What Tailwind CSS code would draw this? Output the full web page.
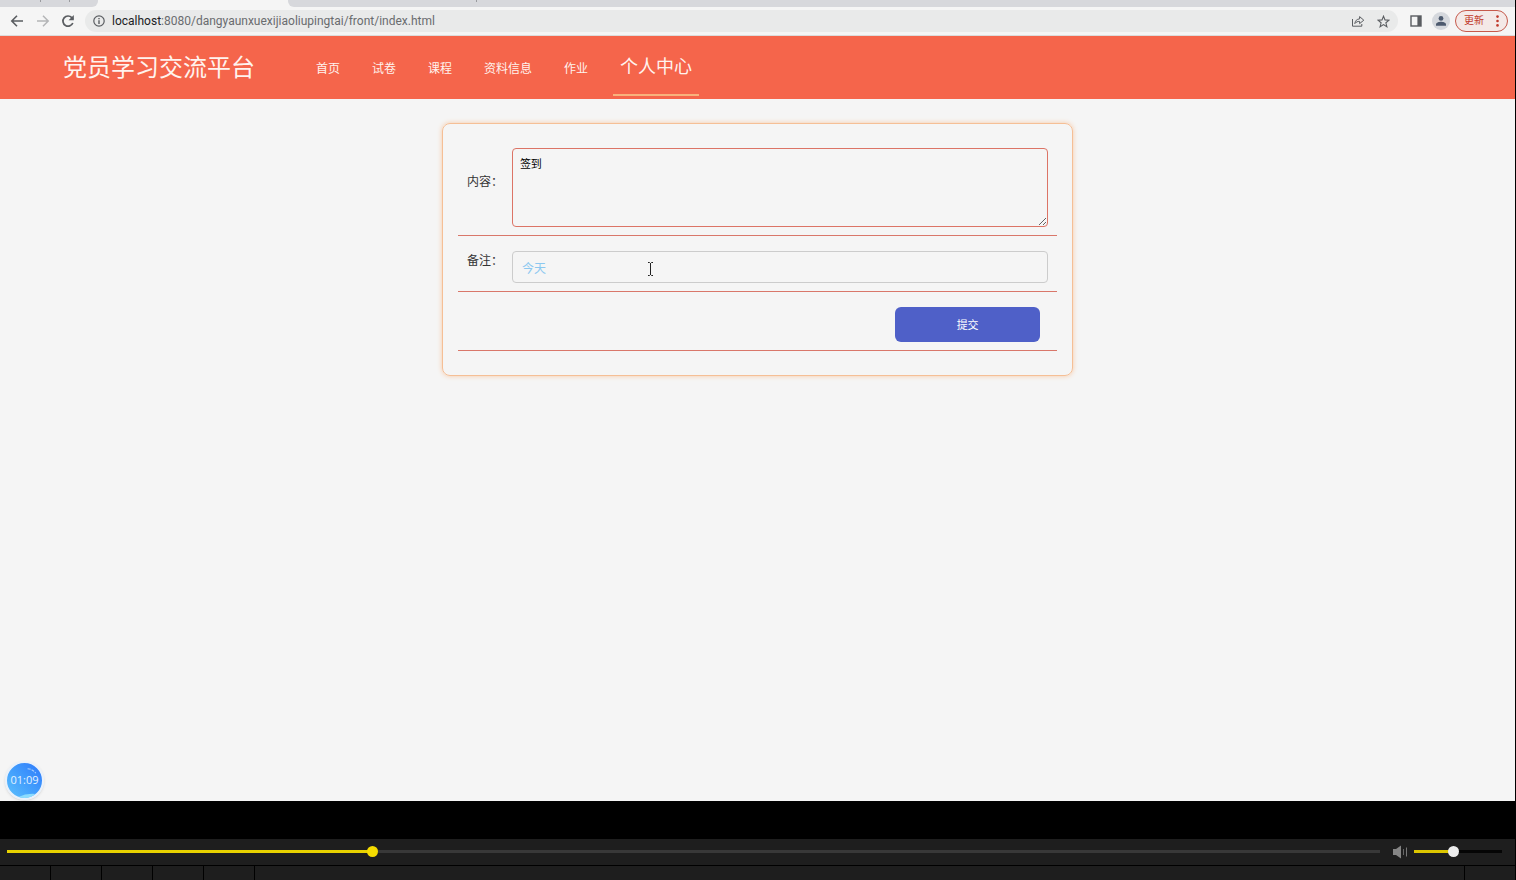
<!DOCTYPE html>
<html lang="zh-CN">
<head>
  <meta charset="UTF-8" />
  <meta name="viewport" content="width=device-width, initial-scale=1.0"/>
  <title>党员学习交流平台</title>
  <script src="https://cdn.jsdelivr.net/npm/@tailwindcss/browser@4"></script>
</head>
<body class="flex flex-col min-h-screen overflow-x-hidden bg-black font-['Open_Sans','Noto_Sans_CJK_SC',sans-serif] text-xs text-[#333]">

  <!-- Browser window -->
  <div class="flex flex-col flex-1 mr-px bg-[#f5f5f5]">

    <!-- Tab strip -->
    <div class="flex h-[7px] bg-[#f5f5f5]">
      <div class="flex justify-end gap-7 w-[98px] pr-7 rounded-br-md bg-[#d7d8dc]">
        <span class="w-px h-[2px] bg-[#9a9b9f]"></span>
        <span class="w-px h-[2px] bg-[#9a9b9f]"></span>
      </div>
      <div class="w-[190px]"></div>
      <div class="flex-1 pl-[188px] rounded-bl-md bg-[#d7d8dc]">
        <div class="w-px h-[2px] bg-[#9a9b9f]"></div>
      </div>
    </div>

    <!-- Toolbar -->
    <div class="flex items-center h-[29px] pl-2 pr-[7px] border-b border-[#dcdcdc] text-[#5a5d61]">
      <button type="button" aria-label="后退" class="w-[18px] flex justify-center">
        <svg class="w-4 h-4" viewBox="0 0 16 16" fill="none" stroke="currentColor" stroke-width="1.6"><path d="M14 8H3M8 2.8L2.8 8L8 13.2"/></svg>
      </button>
      <button type="button" aria-label="前进" class="w-[18px] ml-2 flex justify-center text-[#b4b5b7]">
        <svg class="w-4 h-4" viewBox="0 0 16 16" fill="none" stroke="currentColor" stroke-width="1.5"><path d="M2 8H13M8 2.8L13.2 8L8 13.2"/></svg>
      </button>
      <button type="button" aria-label="刷新" class="w-4 ml-2 flex justify-center">
        <svg class="w-4 h-4" viewBox="0 0 16 16" fill="none" stroke="currentColor" stroke-width="1.7"><path d="M12.8 10A5.1 5.1 0 1 1 11.8 4.6L13 6"/><path d="M13.8 2V7.2H8.6Z" fill="currentColor" stroke="none"/></svg>
      </button>

      <div class="flex items-center flex-1 h-[22px] ml-[9px] px-2 rounded-full bg-[#e9eaea]">
        <svg class="w-3 h-3 shrink-0" viewBox="0 0 12 12" fill="none" stroke="currentColor" stroke-width="1.2"><circle cx="6" cy="6" r="5.2"/><path d="M6 5.3V9M6 3V4.2" stroke-width="1.4"/></svg>
        <p class="flex-1 ml-[7px] font-['Roboto',sans-serif] text-[#6a6c6f]"><span class="text-[#202124]">localhost</span>:8080/dangyaunxuexijiaoliupingtai/front/index.html</p>
        <button type="button" aria-label="分享">
          <svg class="w-[14px] h-[14px]" viewBox="0 0 14 14" fill="none" stroke="currentColor" stroke-width="1"><path d="M1.5 5V12.2H10.8V10"/><path d="M3.8 9.6C4.2 6.8 5.8 5 8.6 4.9V2.6L12.8 6.2L8.6 9.6V7.4C6.6 7.3 5.1 8 3.8 9.6Z"/></svg>
        </button>
        <button type="button" aria-label="收藏" class="ml-3">
          <svg class="w-[13px] h-[13px]" viewBox="0 0 13 13" fill="none" stroke="currentColor" stroke-width="1.1"><path d="M6.5 1.2L8 4.9L12 5.2L8.9 7.8L9.9 11.7L6.5 9.6L3.1 11.7L4.1 7.8L1 5.2L5 4.9Z"/></svg>
        </button>
      </div>

      <button type="button" aria-label="侧边栏" class="ml-3">
        <svg class="w-3 h-3" viewBox="0 0 12 12"><rect x="1" y="1" width="10" height="10" fill="none" stroke="currentColor" stroke-width="1.4"/><path d="M7.4 1H11V11H7.4Z" fill="currentColor"/></svg>
      </button>
      <button type="button" aria-label="用户" class="flex items-center justify-center w-[18px] h-[18px] ml-[10px] rounded-full bg-[#d5d8dd] text-[#4d5a6e]">
        <svg class="w-3 h-3" viewBox="0 0 12 12" fill="currentColor"><circle cx="6" cy="3.4" r="2.4"/><path d="M1 10.8V9.4C1 7.6 4 6.8 6 6.8S11 7.6 11 9.4V10.8Z"/></svg>
      </button>
      <button type="button" class="flex items-center justify-between w-[53px] h-[22px] ml-[5px] px-2 rounded-full border border-[#c65a4c] bg-[#f4e9e7] text-[10px] text-[#c0392b]">
        更新
        <svg class="w-[3px] h-3" viewBox="0 0 3 12" fill="currentColor"><circle cx="1.5" cy="1.6" r="1.3"/><circle cx="1.5" cy="6" r="1.3"/><circle cx="1.5" cy="10.4" r="1.3"/></svg>
      </button>
    </div>

    <!-- Site header -->
    <header class="flex items-center h-[63px] pl-[63px] bg-[#f5654b] text-[#fff3ee]">
      <h1 class="pb-[2px] text-2xl">党员学习交流平台</h1>
      <nav class="flex items-center h-full ml-[45px]">
        <a href="#" class="pt-[2px] px-4">首页</a>
        <a href="#" class="pt-[2px] px-4">试卷</a>
        <a href="#" class="pt-[2px] px-4">课程</a>
        <a href="#" class="pt-[2px] px-4">资料信息</a>
        <a href="#" class="pt-[2px] px-4">作业</a>
        <a href="#" class="flex items-center h-[59px] mt-px ml-[9px] px-[7px] pt-[2px] mb-1 border-b-2 border-[#f8b27c] text-lg">个人中心</a>
      </nav>
    </header>

    <!-- Form card -->
    <main class="flex-1 pt-6">
      <form class="w-5/12 mx-auto pt-[9px] pb-6 px-[15px] rounded-lg border border-[#f5bf96] shadow-[0_0_5px_#f8c9a4]">
        <div class="flex items-center mt-[15px] px-[9px] pb-2 border-b border-[#d9776a]">
          <label for="content" class="w-[45px] pb-3">内容：</label>
          <textarea id="content" class="block flex-1 h-[79px] px-[7px] py-[6px] rounded border border-[#dc7466] text-[11px] leading-[18px] text-black resize">签到</textarea>
        </div>
        <div class="flex items-center mt-[15px] px-[9px] pb-2 border-b border-[#d9776a]">
          <label for="remark" class="w-[45px] pb-3">备注：</label>
          <input id="remark" type="text" value="今天" class="flex-1 h-8 px-[9px] pt-px rounded-sm border border-[#cccccc] text-[#8cc8f0]" />
        </div>
        <div class="flex justify-end mt-[15px] px-[17px] pb-2 border-b border-[#d9776a]">
          <button type="submit" class="w-[145px] h-[35px] pt-px rounded-md bg-[#4f60c8] text-[11px] text-white">提交</button>
        </div>
      </form>
    </main>
  </div>

  <!-- Mouse pointer -->
  <svg class="absolute left-[646px] top-[262px] w-[9px] h-[14px]" viewBox="0 0 9 14" fill="none" stroke="#222" stroke-width="1"><path d="M2 .5H3.5L4.5 1.5L5.5 .5H7M4.5 1V13M2 13.5H3.5L4.5 12.5L5.5 13.5H7"/></svg>

  <!-- Recording time -->
  <div class="absolute left-[5px] top-[761px] flex items-center justify-center w-[39px] h-[39px] rounded-full border-2 border-[#e9f1fb] bg-linear-to-bl from-[#2f78fb] to-[#5cc0fc] text-[11px] text-[#e3f2ff] shadow-sm overflow-hidden">
    <svg class="absolute inset-0 w-full h-full" viewBox="0 0 34 34" fill="none"><path d="M20 5.5Q25 6 28 10" stroke="#a9d0ff" stroke-width="1" stroke-dasharray="3 1"/><path d="M11 33Q19 29 28 30L23 34H12Z" fill="#8cdcfd"/></svg>
    <span class="relative">01:09</span>
  </div>

  <!-- Video player -->
  <footer class="mt-[38px]">
    <div class="flex items-center h-[26px] mr-px pb-px pl-[7px] pr-[13px] bg-[#1e1e1e]">
      <input id="progress" type="range" min="0" max="1000" value="264" aria-label="播放进度" class="flex-1 h-[3px] appearance-none bg-[linear-gradient(#e8d200,#e8d200)] bg-no-repeat bg-[#383838] [&::-webkit-slider-thumb]:appearance-none [&::-webkit-slider-thumb]:w-[11px] [&::-webkit-slider-thumb]:h-[11px] [&::-webkit-slider-thumb]:rounded-full [&::-webkit-slider-thumb]:bg-[#f5dc00]" />
      <button type="button" aria-label="静音" class="ml-3">
        <svg class="w-4 h-[14px]" viewBox="0 0 16 14"><path d="M1 4H4L9 .5V13.5L4 10H1Z" fill="#858585"/><path d="M11.5 4V10" stroke="#666" stroke-width="1"/><path d="M14.5 2.5V11.5" stroke="#777" stroke-width="1"/></svg>
      </button>
      <input id="volume" type="range" min="0" max="1000" value="442" aria-label="音量" class="w-[88px] h-[3px] ml-[6px] appearance-none bg-[linear-gradient(#dcc600,#dcc600)] bg-no-repeat bg-[#050505] [&::-webkit-slider-thumb]:appearance-none [&::-webkit-slider-thumb]:w-[11px] [&::-webkit-slider-thumb]:h-[11px] [&::-webkit-slider-thumb]:rounded-full [&::-webkit-slider-thumb]:bg-[#ececec]" />
    </div>
    <div class="flex gap-px h-[14px] mt-px mr-px *:bg-[#1e1e1e]">
      <div class="w-[50px]"></div>
      <div class="w-[50px]"></div>
      <div class="w-[50px]"></div>
      <div class="w-[50px]"></div>
      <div class="w-[50px]"></div>
      <div class="flex-1"></div>
      <div class="w-[50px]"></div>
    </div>
  </footer>

  <script>
    // Paint the played part of each slider
    document.querySelectorAll('input[type="range"]').forEach((slider) => {
      const paint = () => {
        slider.style.backgroundSize = (slider.value / slider.max * 100) + "% 100%";
      };
      slider.addEventListener("input", paint);
      paint();
    });
  </script>

</body>
</html>
